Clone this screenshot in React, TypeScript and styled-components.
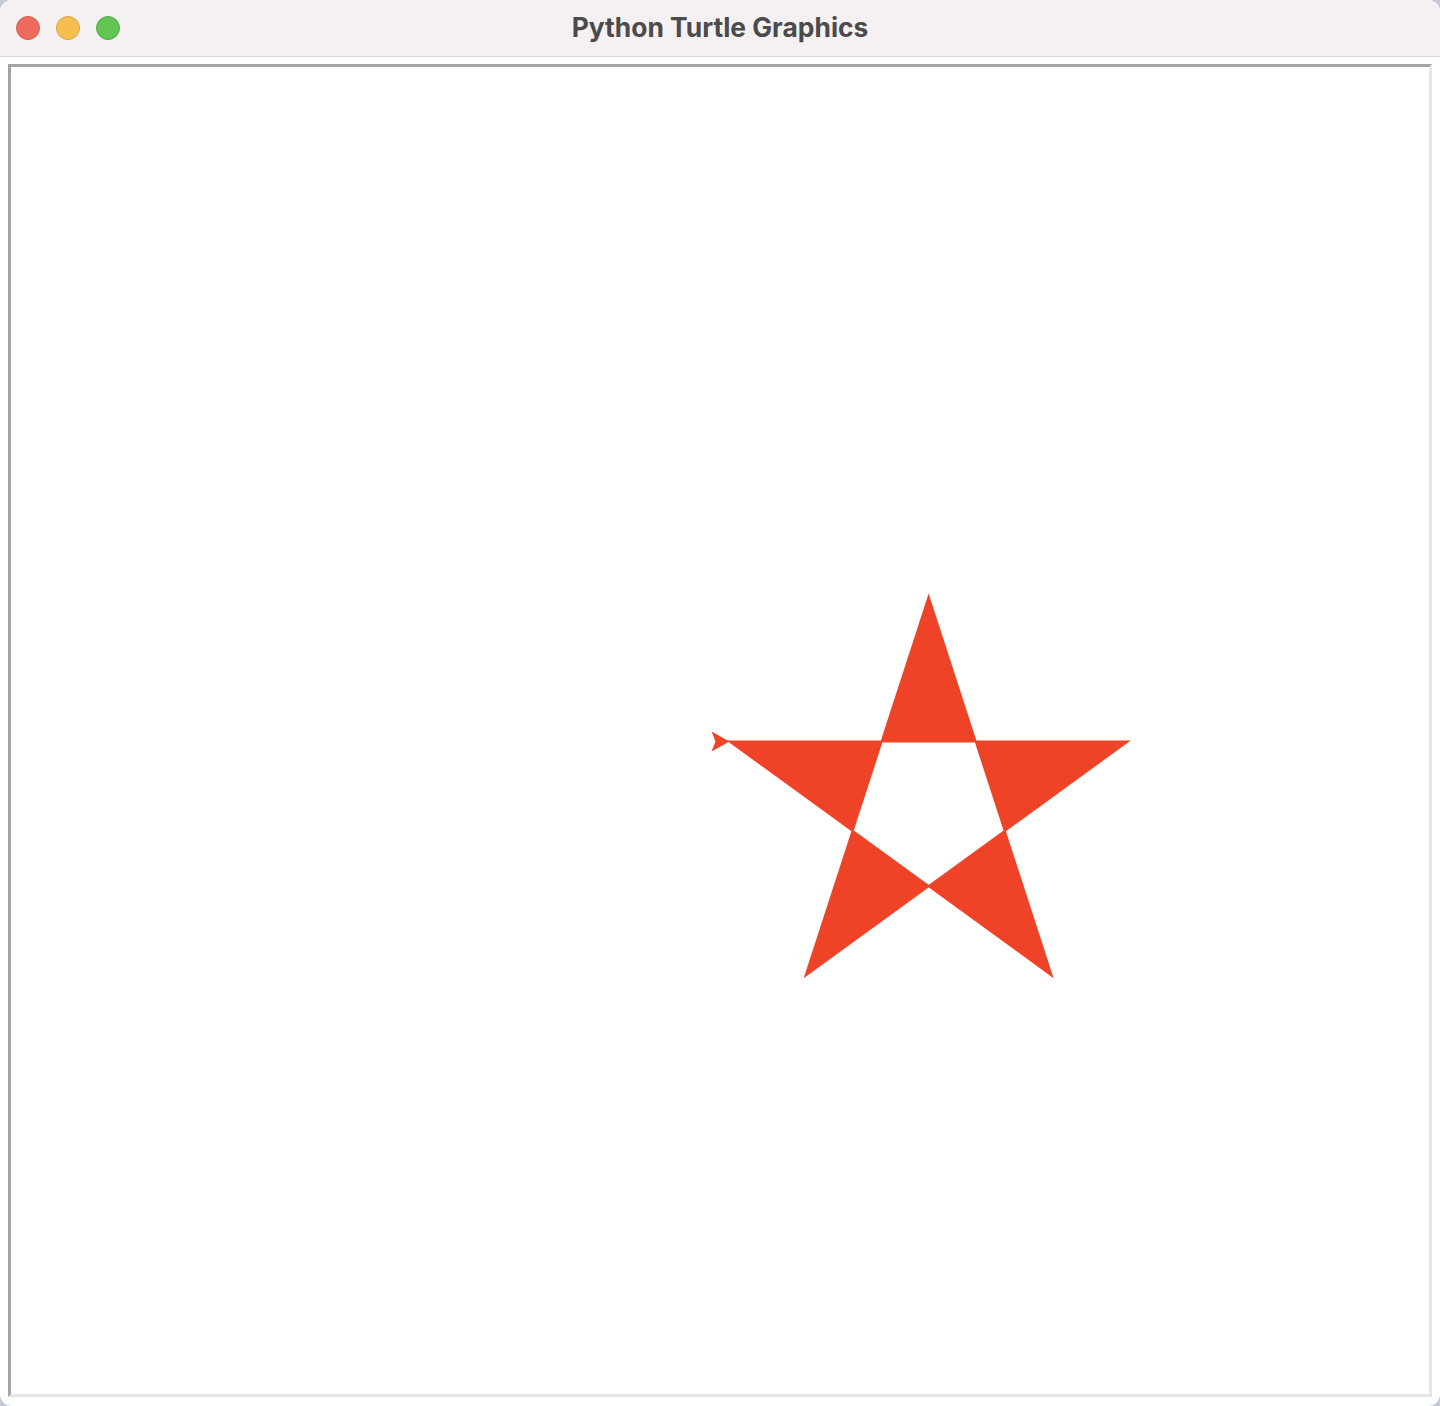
import React from 'react';
import styled, { createGlobalStyle } from 'styled-components';

const GlobalStyle = createGlobalStyle`
  html, body {
    margin: 0;
    padding: 0;
    background: #c5cad6;
  }
`;

const Window = styled.div`
  width: 1440px;
  height: 1406px;
  display: flex;
  flex-direction: column;
  background: #ffffff;
  border-radius: 12px;
  overflow: hidden;
  font-family: Inter, "Liberation Sans", sans-serif;
`;

const TitleBar = styled.div`
  position: relative;
  height: 56px;
  flex-shrink: 0;
  display: flex;
  align-items: center;
  justify-content: center;
  background: #f5f1f2;
  border-bottom: 1px solid #dcdadb;
`;

const Lights = styled.div`
  position: absolute;
  left: 16px;
  top: 16px;
  display: flex;
  gap: 16px;
`;

const Light = styled.span<{ $color: string; $edge: string }>`
  width: 24px;
  height: 24px;
  border-radius: 50%;
  box-sizing: border-box;
  background: ${p => p.$color};
  border: 1px solid ${p => p.$edge};
`;

const Title = styled.h1`
  margin: 0 0 2px 0;
  font-size: 26.4px;
  line-height: 1;
  font-weight: 700;
  color: #4c4a4b;
  letter-spacing: 0;
`;

const Body = styled.div`
  flex: 1;
  display: flex;
  padding: 7px 8px 9px 8px;
`;

const Canvas = styled.div`
  flex: 1;
  border-style: solid;
  border-width: 3px;
  border-color: #a4a4a4 #e6e6e6 #e6e6e6 #a4a4a4;
  background: #ffffff;
  overflow: hidden;
`;

const Drawing = styled.svg`
  display: block;
  width: 100%;
  height: 100%;
`;

const ink = '#ef4327';

export default function App() {
  // turtle: forward(200) right(144) x5, drawn at 2x
  const x0 = 729;
  const y0 = 741;
  const L = 398;
  const pts: [number, number][] = [];
  let x = x0;
  let y = y0;
  let h = 0;
  pts.push([x, y]);
  for (let i = 0; i < 5; i++) {
    x += L * Math.cos((h * Math.PI) / 180);
    y -= L * Math.sin((h * Math.PI) / 180);
    pts.push([x, y]);
    h -= 144;
  }
  const d = 'M' + pts.map(p => `${p[0].toFixed(1)},${p[1].toFixed(1)}`).join(' L') + ' Z';

  return (
    <>
      <GlobalStyle />
      <Window>
        <TitleBar>
          <Lights>
            <Light $color="#ee6a5f" $edge="#d85a50" />
            <Light $color="#f5be4f" $edge="#dca53c" />
            <Light $color="#62c554" $edge="#52ac45" />
          </Lights>
          <Title>Python Turtle Graphics</Title>
        </TitleBar>
        <Body>
          <Canvas>
            <Drawing viewBox="11 67 1417 1326" preserveAspectRatio="xMinYMin meet">
              <path d={d} fill={ink} fillRule="evenodd" stroke={ink} strokeWidth={2} strokeMiterlimit={10} />
              <polygon points="729,741 711,731 715,741 711,751" fill={ink} />
            </Drawing>
          </Canvas>
        </Body>
      </Window>
    </>
  );
}
